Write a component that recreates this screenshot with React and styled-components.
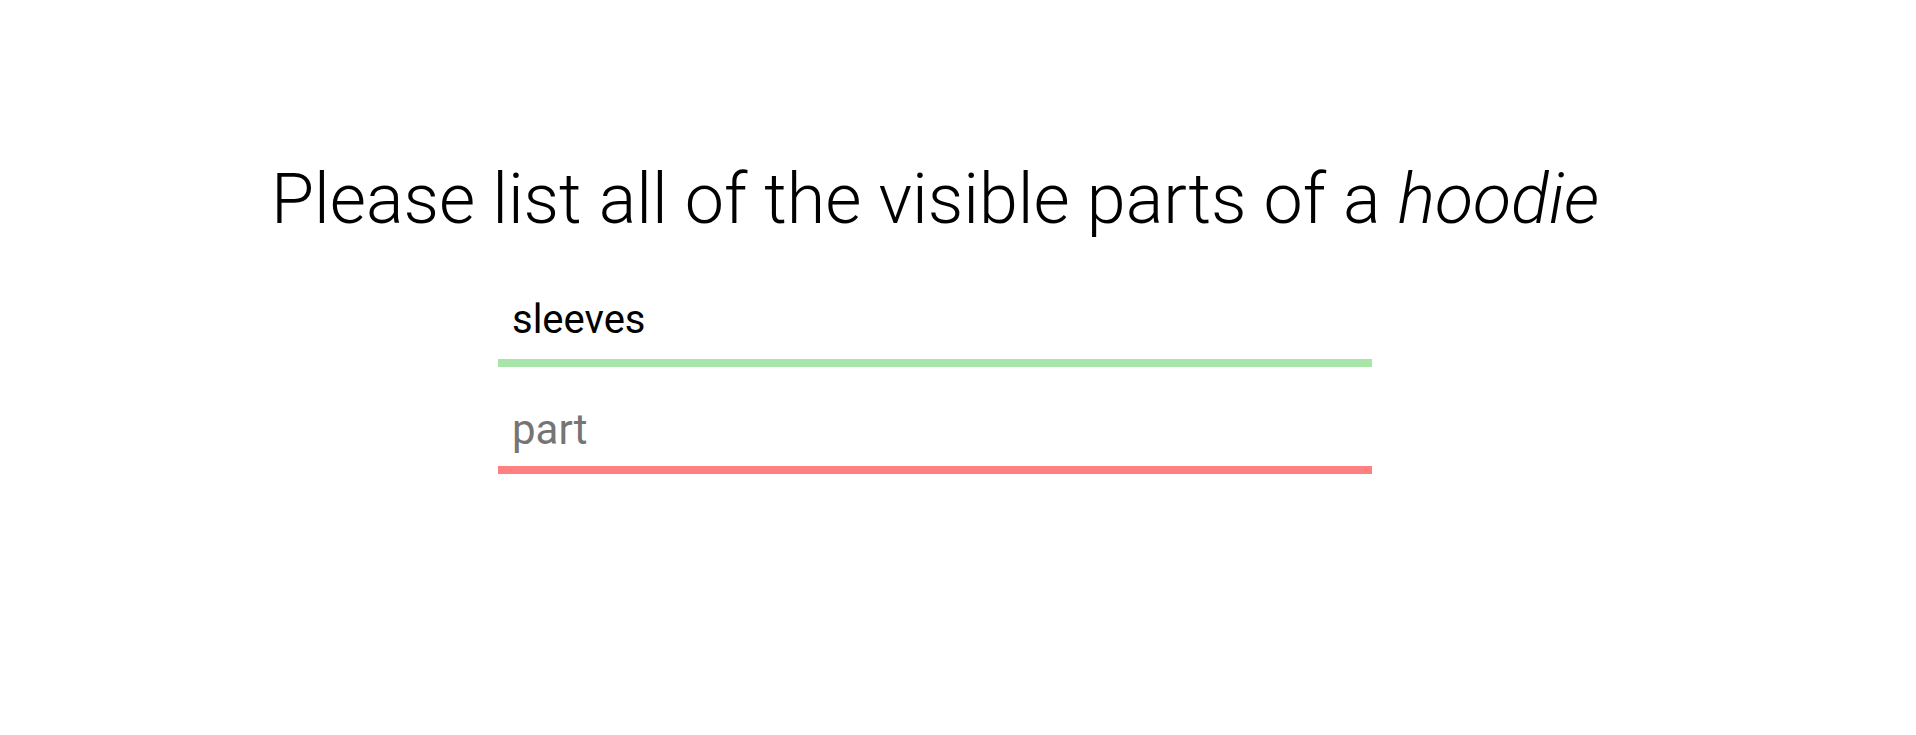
import React, { useState } from 'react';
import styled, { createGlobalStyle } from 'styled-components';

const GlobalStyle = createGlobalStyle`
  html, body {
    margin: 0;
    padding: 0;
    background: #ffffff;
  }
  body {
    font-family: Roboto, "Noto Sans", Arial, sans-serif;
    color: #000;
  }
`;

const Page = styled.div`
  display: flex;
  flex-direction: column;
  align-items: center;
  padding: 158px 46px 0 0;
  min-height: 735px;
  box-sizing: border-box;
`;

const Title = styled.h1`
  margin: 0 0 56px;
  font-size: 70px;
  font-weight: 300;
  line-height: 82px;
  text-align: center;
  em {
    font-style: italic;
  }
`;

const List = styled.div`
  width: 874px;
  display: flex;
  flex-direction: column;
  gap: 38px;
`;

const Answer = styled.div`
  padding: 0 14px 16px;
  font-size: 40px;
  line-height: 47px;
  border-bottom: 8px solid ${p => (p.$ok ? '#a7e6a8' : '#ff8080')};
`;

const Field = styled.input`
  display: block;
  width: 100%;
  box-sizing: border-box;
  margin: 0;
  padding: 0 14px 12px;
  border: none;
  border-bottom: 8px solid #ff8080;
  outline: none;
  background: transparent;
  font-family: Roboto, "Noto Sans", Arial, sans-serif;
  font-size: 42px;
  line-height: 49px;
  height: 69px;
  color: #000;
  &::placeholder {
    color: #757575;
  }
`;

export default function App() {
  const [answers] = useState(['sleeves']);
  const [value, setValue] = useState('');

  return (
    <>
      <GlobalStyle />
      <Page>
        <Title>
          Please list all of the visible parts of a <em>hoodie</em>
        </Title>
        <List>
          {answers.map(a => (
            <Answer key={a} $ok>{a}</Answer>
          ))}
          <Field
            placeholder="part"
            value={value}
            onChange={e => setValue(e.target.value)}
          />
        </List>
      </Page>
    </>
  );
}
